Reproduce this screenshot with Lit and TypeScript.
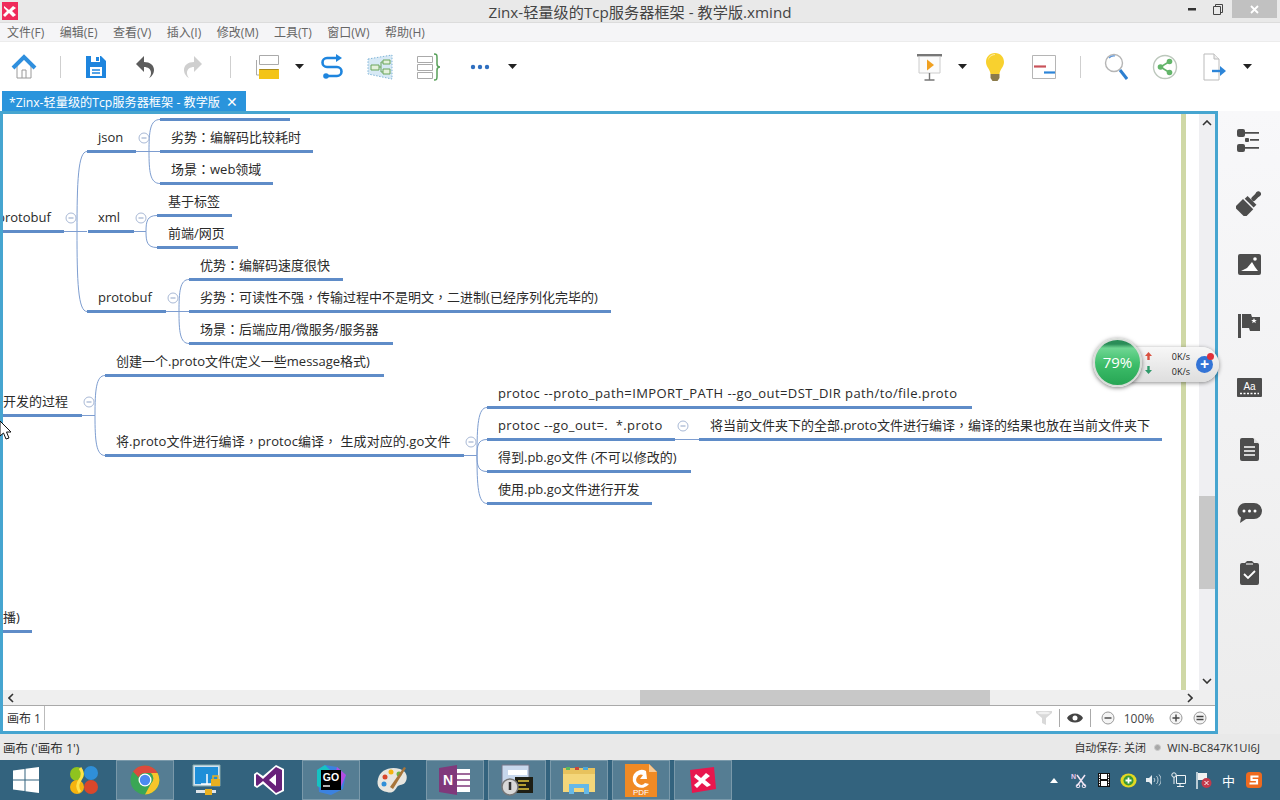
import { LitElement, html, css, svg } from "lit";
import { customElement } from "lit/decorators.js";

// canvas origin in page coordinates, node data below is in page coordinates
const OX = 3;
const OY = 114;

interface MapNode {
  text: string;
  tx: number;
  y: number;
  x1: number;
  x2: number;
  spacing?: number;
}

const NODES: MapNode[] = [
  { text: "", tx: 171, y: 106, x1: 160, x2: 290 },
  { text: "json", tx: 98, y: 138, x1: 87, x2: 136 },
  { text: "劣势：编解码比较耗时", tx: 171, y: 138, x1: 160, x2: 313 },
  { text: "场景：web领域", tx: 171, y: 170, x1: 160, x2: 273 },
  { text: "protobuf", tx: -3, y: 218, x1: 3, x2: 64 },
  { text: "xml", tx: 98, y: 218, x1: 88, x2: 134 },
  { text: "基于标签", tx: 168, y: 202, x1: 157, x2: 232 },
  { text: "前端/网页", tx: 168, y: 234, x1: 157, x2: 238 },
  { text: "protobuf", tx: 98, y: 298, x1: 87, x2: 166 },
  { text: "优势：编解码速度很快", tx: 200, y: 266, x1: 189, x2: 343 },
  { text: "劣势：可读性不强，传输过程中不是明文，二进制(已经序列化完毕的)", tx: 200, y: 298, x1: 189, x2: 611 },
  { text: "场景：后端应用/微服务/服务器", tx: 200, y: 330, x1: 189, x2: 393 },
  { text: "开发的过程", tx: 3, y: 402, x1: 3, x2: 82 },
  { text: "创建一个.proto文件(定义一些message格式)", tx: 116, y: 362, x1: 105, x2: 384 },
  { text: "将.proto文件进行编译，protoc编译， 生成对应的.go文件", tx: 116, y: 442, x1: 105, x2: 464, spacing: 0.06 },
  { text: "protoc --proto_path=IMPORT_PATH --go_out=DST_DIR path/to/file.proto", tx: 498, y: 394, x1: 487, x2: 972, spacing: 0.41 },
  { text: "protoc --go_out=.  *.proto", tx: 498, y: 426, x1: 487, x2: 675, spacing: 0.4 },
  { text: "将当前文件夹下的全部.proto文件进行编译，编译的结果也放在当前文件夹下", tx: 710, y: 426, x1: 699, x2: 1162 },
  { text: "得到.pb.go文件 (不可以修改的)", tx: 498, y: 458, x1: 487, x2: 691 },
  { text: "使用.pb.go文件进行开发", tx: 498, y: 490, x1: 487, x2: 652 },
  { text: "播)", tx: 3, y: 618, x1: 3, x2: 32 },
];

// parent line end, spine x, child x, parent y, child ys
const BRANCHES = [
  { px: 64, sx: 77, cx: 87, py: 231, cy: [151, 231, 311] },
  { px: 136, sx: 149, cx: 160, py: 151, cy: [119, 151, 183] },
  { px: 134, sx: 146, cx: 157, py: 231, cy: [215, 247] },
  { px: 166, sx: 179, cx: 189, py: 311, cy: [279, 311, 343] },
  { px: 82, sx: 95, cx: 105, py: 415, cy: [375, 455] },
  { px: 464, sx: 477, cx: 487, py: 455, cy: [407, 439, 471, 503] },
  { px: 675, sx: 687, cx: 699, py: 439, cy: [439] },
];

const COLLAPSE = [
  [71, 218], [144, 138], [141, 218], [173, 298], [89, 402], [471, 442], [683, 426],
];

const MENU = ["文件(F)", "编辑(E)", "查看(V)", "插入(I)", "修改(M)", "工具(T)", "窗口(W)", "帮助(H)"];

const caret = svg`<svg width="9" height="5" viewBox="0 0 9 5"><path d="M0 0h9L4.5 5z" fill="#222"/></svg>`;
const tbSep = html`<span class="tb-sep"></span>`;

const ICON_HOME = html`<svg width="26" height="26" viewBox="0 0 26 26"><path d="M6 12v12h14V12" fill="#fff" stroke="#9a9a9a"/><path d="M11 24v-8h4v8" fill="none" stroke="#9a9a9a"/><path d="M2 14 13 3l11 11" fill="none" stroke="#2f8fde" stroke-width="4"/></svg>`;
const ICON_SAVE = html`<svg width="22" height="24" viewBox="0 0 22 24"><path d="M1 1h15l5 5v17H1z" fill="#1e85de"/><path d="M6 1h9v6H6z" fill="#fff"/><path d="M11 2h3v4h-3z" fill="#1e85de"/><path d="M5 12h12v9H5z" fill="#fff"/><path d="M7 15h8M7 18h8" stroke="#1e85de" stroke-width="1.4"/></svg>`;
const ICON_UNDO = html`<svg width="20" height="24" viewBox="0 0 20 24"><path d="M9 1 1 9l8 8v-5c4 0 7 2 7 6 0 2-1 4-2 5 4-2 5-6 5-8 0-5-4-8-10-8z" fill="#5c5c5c"/></svg>`;
const ICON_REDO = html`<svg width="20" height="24" viewBox="0 0 20 24"><path d="M11 1l8 8-8 8v-5c-4 0-7 2-7 6 0 2 1 4 2 5-4-2-5-6-5-8 0-5 4-8 10-8z" fill="#cfcfcf"/></svg>`;
const ICON_TOPIC = html`<svg width="24" height="26" viewBox="0 0 24 26"><path d="M4.5 1.5h19v9h-19z" fill="#fff" stroke="#aaa"/><path d="M1.5 6v15h3" fill="none" stroke="#aaa"/><path d="M4 15h20v10H4z" fill="#f3c417"/><path d="M4.5 15.5h19" stroke="#a98b1e"/></svg>`;
const ICON_REL = html`<svg width="24" height="26" viewBox="0 0 24 26"><path d="M18 4H7a4.500 4.500 0 0 0 0 9h10a4.500 4.500 0 0 1 0 9H8" fill="none" stroke="#1e85de" stroke-width="2.600"/><path d="M16 0l6 4-6 4z" fill="#1e85de"/><circle cx="6" cy="22" r="2.800" fill="#1e85de"/></svg>`;
const ICON_BOUNDARY = html`<svg width="26" height="26" viewBox="0 0 26 26"><path d="M1 5 25 1v24L1 20z" fill="#d7e9f5" stroke="#7fb4d8" stroke-dasharray="1.500 1.500"/><path d="M4 11h8v5H4zM16 6h7v4h-7zM16 15h7v5h-7z" fill="#e4f1dc" stroke="#6aa55a"/><path d="M12 13h2V8h2M14 13v5h2" fill="none" stroke="#6aa55a"/></svg>`;
const ICON_SUMMARY = html`<svg width="26" height="28" viewBox="0 0 26 28"><path d="M1.500 3.500h15v6h-15zM1.500 11.500h15v6h-15zM1.500 19.500h15v6h-15z" fill="#fff" stroke="#aaa"/><path d="M18 1c3 0 3 1 3 4v6c0 2 1 3 3 3-2 0-3 1-3 3v6c0 3 0 4-3 4" fill="none" stroke="#58a05a" stroke-width="1.500"/></svg>`;
const ICON_MORE = html`<svg width="20" height="6" viewBox="0 0 20 6"><circle cx="3" cy="3" r="2.200" fill="#2f6fc0"/><circle cx="10" cy="3" r="2.200" fill="#2f6fc0"/><circle cx="17" cy="3" r="2.200" fill="#2f6fc0"/></svg>`;
const ICON_PRESENT = html`<svg width="26" height="28" viewBox="0 0 26 28"><path d="M0 1h25v2.500H0z" fill="#777"/><path d="M2 3.500h21V20H2z" fill="#fbfbfb" stroke="#ccc"/><path d="M10 6.500l7 5.500-7 5.500z" fill="#f0a020"/><path d="M12.500 20v7M7.500 27h10" stroke="#777" stroke-width="1.400"/></svg>`;
const ICON_BULB = html`<svg width="20" height="30" viewBox="0 0 20 30"><path d="M10 1C4.500 1 1 5 1 10c0 5 4 7 4.500 12h9C15 17 19 15 19 10c0-5-3.500-9-9-9z" fill="#f8d12f"/><path d="M10 2c-5 0-7 4-7 7 0-2 3-6 7-6z" fill="#fdeb9a"/><path d="M5.500 22h9v4l-2 3h-5l-2-3z" fill="#8b7b4a"/></svg>`;
const ICON_GANTT = html`<svg width="24" height="24" viewBox="0 0 24 24"><path d="M.5.500h23v23H.5z" fill="#fff" stroke="#b5b5b5"/><path d="M2 11.500h12" stroke="#c9525a" stroke-width="2.200"/><path d="M12 17.500h11" stroke="#2d85d8" stroke-width="2.200"/></svg>`;
const ICON_SEARCH = html`<svg width="24" height="28" viewBox="0 0 24 28"><circle cx="10" cy="10" r="8.500" fill="#fff" stroke="#b5b5b5" stroke-width="1.400"/><path d="M5 5a7 7 0 0 1 6-2" fill="none" stroke="#5c95d8" stroke-width="1.200"/><path d="M16 17l7 9" stroke="#2d7fd0" stroke-width="3"/></svg>`;
const ICON_SHARE = html`<svg width="26" height="26" viewBox="0 0 26 26"><circle cx="13" cy="13" r="11.500" fill="#fff" stroke="#bcc7bc" stroke-width="1.400"/><path d="M17.500 7.500 8.500 13l9 5.500" fill="none" stroke="#63b56a" stroke-width="1.600"/><circle cx="17.500" cy="7.500" r="2.800" fill="#63b56a"/><circle cx="8.500" cy="13" r="2.800" fill="#63b56a"/><circle cx="17.500" cy="18.500" r="2.800" fill="#63b56a"/></svg>`;
const ICON_EXPORT = html`<svg width="24" height="28" viewBox="0 0 24 28"><path d="M1 1h10l5 5v21H1z" fill="#fff" stroke="#bbb"/><path d="M11 1v5h5" fill="#eee" stroke="#bbb"/><path d="M9 18h10" stroke="#2d85d8" stroke-width="2.400"/><path d="M17 13l6 5-6 5z" fill="#2d85d8"/></svg>`;

const TOOLS = [
  { cx: 24, w: 26, c: ICON_HOME },
  { cx: 60, w: 1, c: tbSep },
  { cx: 96, w: 22, c: ICON_SAVE },
  { cx: 145, w: 20, c: ICON_UNDO },
  { cx: 193, w: 20, c: ICON_REDO },
  { cx: 230, w: 1, c: tbSep },
  { cx: 267, w: 24, c: ICON_TOPIC },
  { cx: 299, w: 9, c: caret },
  { cx: 332, w: 24, c: ICON_REL },
  { cx: 380, w: 26, c: ICON_BOUNDARY },
  { cx: 429, w: 26, c: ICON_SUMMARY },
  { cx: 480, w: 20, c: ICON_MORE },
  { cx: 512, w: 9, c: caret },
  { cx: 930, w: 26, c: ICON_PRESENT },
  { cx: 962, w: 9, c: caret },
  { cx: 995, w: 20, c: ICON_BULB },
  { cx: 1044, w: 24, c: ICON_GANTT },
  { cx: 1080, w: 1, c: tbSep },
  { cx: 1116, w: 24, c: ICON_SEARCH },
  { cx: 1165, w: 26, c: ICON_SHARE },
  { cx: 1215, w: 24, c: ICON_EXPORT },
  { cx: 1247, w: 9, c: caret },
];

const RAIL = [
  html`<svg width="24" height="24" viewBox="0 0 24 24" fill="#4d4d4d"><rect x="0" y="0" width="8" height="8" rx="2"/><rect x="0" y="15" width="8" height="8" rx="2"/><rect x="8" y="9" width="4" height="4" rx="1"/><path d="M8 3h14v1.800H8zM13 10h9v1.800h-9zM8 18h14v1.800H8z"/></svg>`,
  html`<svg width="26" height="26" viewBox="0 0 26 26" fill="#4d4d4d"><g transform="rotate(45 13 13)"><rect x="11" y="-2" width="4.500" height="11" rx="2"/><circle cx="13.200" cy="0" r="2.600"/><rect x="7" y="9" width="12.500" height="4"/><path d="M6 14.500h14.500V26H6z"/></g></svg>`,
  html`<svg width="23" height="21" viewBox="0 0 23 21"><rect width="23" height="21" rx="2" fill="#4d4d4d"/><path d="M3 17l6-3 5-6 3 5 3 4z" fill="#fff"/><circle cx="17" cy="5" r="1.800" fill="#fff"/></svg>`,
  html`<svg width="22" height="24" viewBox="0 0 22 24"><path d="M0 0h3v24H0z" fill="#4d4d4d"/><path d="M4 0h9l1 3h8v14H12l-1-3H4z" fill="#4d4d4d"/><path d="M16 4l.800 2h2l-1.600 1.300.600 2-1.800-1.200-1.800 1.200.600-2L13.200 6h2z" fill="#fff"/></svg>`,
  html`<svg width="25" height="19" viewBox="0 0 25 19"><path d="M1 0h23a1 1 0 0 1 1 1v17a1 1 0 0 1-1 1H1a1 1 0 0 1-1-1V1a1 1 0 0 1 1-1z" fill="#4d4d4d"/><text x="12.500" y="11.500" text-anchor="middle" font-size="10" fill="#fff" font-family="Liberation Sans">Aa</text><path d="M3 15.500h19" stroke="#fff" stroke-width="1.500" stroke-dasharray="2 1.500"/></svg>`,
  html`<svg width="19" height="23" viewBox="0 0 19 23"><path d="M2 0h11l6 6v15a2 2 0 0 1-2 2H2a2 2 0 0 1-2-2V2a2 2 0 0 1 2-2z" fill="#4d4d4d"/><path d="M14 0l5 5h-5z" fill="#ddd"/><path d="M4 9h11M4 13h11M4 17h11" stroke="#fff" stroke-width="1.300"/></svg>`,
  html`<svg width="25" height="27" viewBox="0 -6 25 27"><path d="M8 0h9a8 8 0 0 1 0 16H9l-6 4 1-5.500A8 8 0 0 1 8 0z" fill="#4d4d4d"/><circle cx="7" cy="8" r="1.500" fill="#fff"/><circle cx="12.500" cy="8" r="1.500" fill="#fff"/><circle cx="18" cy="8" r="1.500" fill="#fff"/></svg>`,
  html`<svg width="19" height="24" viewBox="0 0 19 24"><path d="M2 2h3l2-2h5l2 2h3a2 2 0 0 1 2 2v18a2 2 0 0 1-2 2H2a2 2 0 0 1-2-2V4a2 2 0 0 1 2-2z" fill="#4d4d4d"/><path d="M6 3h7" stroke="#eee" stroke-width="1.200"/><path d="M4 13l4 4 7-7" fill="none" stroke="#fff" stroke-width="1.800"/></svg>`,
];

// taskbar programs, left to right
const T_CLUSTER = html`<svg width="32" height="32" viewBox="0 0 32 32"><circle cx="9" cy="10" r="7" fill="#8fc31f"/><circle cx="23" cy="9" r="7" fill="#2f8fd8"/><circle cx="9" cy="23" r="7" fill="#f5b30f"/><circle cx="23" cy="23" r="7" fill="#d9472b"/><path d="M12 4c3 4 3 8 0 12s-3 8 0 12" fill="none" stroke="#ffe14a" stroke-width="3"/></svg>`;
const T_CHROME = html`<svg width="30" height="30" viewBox="0 0 30 30"><circle cx="15" cy="15" r="14.500" fill="#3aa655"/><path d="M15 .500A14.500 14.500 0 0 1 27.600 8H15a7 7 0 0 0-6.500 4.300L3 6.500A14.500 14.500 0 0 1 15 .500z" fill="#dc4a3d"/><path d="M27.600 8A14.500 14.500 0 0 1 15 29.500L21 18.500A7 7 0 0 0 21 8z" fill="#f7c52b"/><circle cx="15" cy="15" r="6.500" fill="#fff"/><circle cx="15" cy="15" r="5.200" fill="#4a8af0"/></svg>`;
const T_REMOTE = html`<svg width="30" height="32" viewBox="0 0 30 32"><path d="M1 1h27v21H1z" fill="#cfe3f2" stroke="#8aa"/><path d="M3 3h23v17H3z" fill="#1e8fd8"/><path d="M15 10v10M9 20h12" stroke="#fff" stroke-width="1.500"/><path d="M4 26h20v3H4z" fill="#dfe5ea"/><rect x="19" y="15" width="9" height="7" fill="#e8b021"/><path d="M21 15v-3h5v3" fill="none" stroke="#e8b021" stroke-width="1.500"/><rect x="13" y="25" width="7" height="6" fill="#e8b021"/></svg>`;
const T_VS = html`<svg width="32" height="32" viewBox="0 0 32 32"><path d="M23 1 31 5v22l-8 4-13-11-6 4-3-2V10l3-2 6 4z" fill="#fff"/><path d="M23 3 29 6v20l-6 3-13-12-6 5-1-1V11l1-1 6 5zM23 10l-7 6 7 6z" fill="#68217a"/></svg>`;
const T_GO = html`<svg width="32" height="32" viewBox="0 0 32 32"><path d="M2 6 10 1l12 2 9 8-3 14-12 6-12-3z" fill="#3b82e0"/><path d="M2 6l8-5 6 6-8 18-6-3z" fill="#16c2c2"/><path d="M22 3l9 8-5 12-6-12z" fill="#b14ee0"/><rect x="6" y="6" width="20" height="20" fill="#000"/><text x="16" y="17" text-anchor="middle" font-size="10.500" font-weight="700" fill="#fff" font-family="Liberation Sans">GO</text><path d="M8 22h7" stroke="#fff" stroke-width="1.400"/></svg>`;
const T_PAINT = html`<svg width="32" height="30" viewBox="0 0 32 30"><path d="M2 14C4 5 14 1 24 4c6 2 8 7 6 12s-7 3-9 6-4 7-10 5C4 26 0 21 2 14z" fill="#e8e6df"/><circle cx="9" cy="12" r="2.500" fill="#d9472b"/><circle cx="15" cy="7" r="2.500" fill="#f5b30f"/><circle cx="23" cy="9" r="2.500" fill="#6db33f"/><path d="M14 22 28 2l2 1-13 21z" fill="#a8753a"/><circle cx="8" cy="19" r="2.500" fill="#2f8fd8"/></svg>`;
const T_ONE = html`<svg width="32" height="30" viewBox="0 0 32 30"><path d="M0 3 18 0v30L0 27z" fill="#80397b"/><text x="9" y="20" text-anchor="middle" font-size="14" font-weight="700" fill="#fff" font-family="Liberation Sans">N</text><path d="M18 4h13v23H18z" fill="#fff"/><path d="M18 9h13M18 15h13M18 21h13" stroke="#80397b" stroke-width="1.500"/></svg>`;
const T_LOCK = html`<svg width="32" height="32" viewBox="0 0 32 32"><path d="M1 1h27v21H1z" fill="#c7d7ec" stroke="#778"/><path d="M7 6h19v5H7z" fill="#fff"/><path d="M14 13h18v16H14z" fill="#1e1e14"/><path d="M17 17h11M17 21h8M17 25h11" stroke="#e3c83c" stroke-width="1.500"/><circle cx="9" cy="23" r="8" fill="#d8d8d8" stroke="#777" stroke-width="1.500"/><path d="M9 18v8" stroke="#333" stroke-width="2.500"/></svg>`;
const T_FOLDER = html`<svg width="34" height="30" viewBox="0 0 34 30"><path d="M1 3h32v24H1z" fill="#f4d67a"/><path d="M1 3h32v6H1z" fill="#e8c25d"/><path d="M4 2h4v3H4z" fill="#5cb85c"/><path d="M13 2h4v3h-4z" fill="#c9473a"/><path d="M21 2h5v3h-5z" fill="#4aa7d8"/><path d="M7 29V19h20v10h-5v-6H12v6z" fill="#65b8e8"/></svg>`;
const T_PDF = html`<svg width="33" height="33" viewBox="0 0 33 33"><path d="M0 0h24l8 8v25H0z" fill="#f08a24"/><path d="M24 0l8 8h-8z" fill="#f9c992"/><path d="M21 7a9 9 0 1 0 3 13l-4-1a5 5 0 1 1-2-8l-3 4h7z" fill="#fff"/><text x="16" y="31" text-anchor="middle" font-size="8" fill="#fff" font-family="Liberation Sans">PDF</text></svg>`;
const T_XMIND = html`<svg width="28" height="28" viewBox="0 0 28 28"><path d="M1 4 25 1l2 22-24 4z" fill="#e8174e"/><path d="M7 8l5 4 5-5 4 3-5 4 6 5-4 2-5-4-5 5-3-3 5-4-5-4z" fill="#fff"/></svg>`;

const TASKS = [
  { icon: T_CLUSTER, on: false, w: 65, mr: 0 },
  { icon: T_CHROME, on: true, w: 58, mr: 4 },
  { icon: T_REMOTE, on: false, w: 58, mr: 0 },
  { icon: T_VS, on: false, w: 66, mr: 0 },
  { icon: T_GO, on: true, w: 58, mr: 4 },
  { icon: T_PAINT, on: false, w: 56, mr: 6 },
  { icon: T_ONE, on: true, w: 58, mr: 4 },
  { icon: T_LOCK, on: true, w: 58, mr: 4 },
  { icon: T_FOLDER, on: true, w: 58, mr: 4 },
  { icon: T_PDF, on: true, w: 58, mr: 4 },
  { icon: T_XMIND, on: true, w: 58, mr: 0 },
];

const TRAY = [
  html`<svg width="8" height="5" viewBox="0 0 8 5"><path d="M0 5 4 0l4 5z" fill="#fff"/></svg>`,
  html`<svg width="16" height="16" viewBox="0 0 16 16"><text x="0" y="7" font-size="7" font-weight="700" fill="#e8c8f0" font-family="Liberation Sans">N</text><path d="M6 3l8 11M14 3 6 14" stroke="#f2e6f5" stroke-width="1.500"/><circle cx="7" cy="14" r="1.800" fill="none" stroke="#f2e6f5"/><circle cx="13" cy="14" r="1.800" fill="none" stroke="#f2e6f5"/></svg>`,
  html`<svg width="12" height="14" viewBox="0 0 12 14"><rect width="12" height="14" fill="#111"/><rect x="3" y="1" width="6" height="5" fill="#fff"/><rect x="3" y="8" width="6" height="5" fill="#fff"/><path d="M1.500 1v12M10.500 1v12" stroke="#fff" stroke-dasharray="1.500 1"/></svg>`,
  html`<svg width="17" height="15" viewBox="0 0 17 15"><ellipse cx="8.500" cy="7.500" rx="8" ry="7" fill="#e4d822"/><circle cx="8.500" cy="7.500" r="5" fill="#3a9a36"/><path d="M5.500 7.500h6M8.500 4.500v6" stroke="#fff" stroke-width="1.800"/></svg>`,
  html`<svg width="15" height="14" viewBox="0 0 15 14"><path d="M0 5h3l3-3v10L3 9H0z" fill="#e6edf1"/><path d="M8 5a3 3 0 0 1 0 4M10.500 3a6 6 0 0 1 0 8M13 1.500a8 8 0 0 1 0 11" fill="none" stroke="#b8cad4"/></svg>`,
  html`<svg width="15" height="16" viewBox="0 0 15 16"><path d="M5.500 3.500h9v8h-9zM9 11.500v3M6 14.500h7" fill="none" stroke="#f0f4f6"/><circle cx="3" cy="3" r="2.200" fill="none" stroke="#f0f4f6"/><path d="M3 5v7" stroke="#f0f4f6"/></svg>`,
  html`<svg width="16" height="17" viewBox="0 0 16 17"><path d="M1 0v17" stroke="#e6edf1" stroke-width="1.500"/><path d="M2 1h9v7H2z" fill="#f2f2f2"/><circle cx="10.500" cy="11" r="5" fill="#c43a4b"/><path d="M8.500 9l4 4M12.500 9l-4 4" stroke="#fff"/></svg>`,
  html`<span class="tray-zh">中</span>`,
  html`<svg width="16" height="16" viewBox="0 0 16 16"><rect width="16" height="16" rx="3.500" fill="#ee6a1f"/><path d="M12.500 4.500H5.500v3.500h5.500v3.500H3.500" fill="none" stroke="#fff" stroke-width="2.200"/></svg>`,
];

@customElement("app-root")
export class AppRoot extends LitElement {
  static styles = css`
    :host {
      display: block;
      width: 1280px;
      height: 800px;
      overflow: hidden;
      font-family: "Open Sans", "Noto Sans CJK SC", sans-serif;
      color: #222;
      background: #fff;
    }
    .title {
      height: 23px;
      background: #e9e9e9;
      border-bottom: 1px solid #dcdcdc;
      box-sizing: border-box;
      display: flex;
      align-items: center;
      position: relative;
      font-size: 15.2px;
      color: #444;
    }
    .title-text { flex: 1; text-align: center; white-space: nowrap; }
    .app-logo { position: absolute; left: 2px; top: 2px; display: block; }
    .win { position: absolute; right: 3px; top: 0; height: 18px; display: flex; align-items: center; }
    .win-btn { width: 26px; display: flex; justify-content: center; }
    .win-close {
      width: 45px; height: 18px; background: #c1c1c1; color: #fff; display: flex;
      align-items: center; justify-content: center; margin-left: 1px;
    }
    .menu {
      height: 19px;
      background: #f5f5f7;
      border-bottom: 1px solid #ececec;
      box-sizing: border-box;
      display: flex;
      align-items: center;
      gap: 15.5px;
      padding-left: 7px;
      font-size: 12px;
      color: #666;
    }
    .tools { height: 49px; background: #fff; display: flex; align-items: center; }
    .tool { display: flex; align-items: center; justify-content: center; flex: none; }
    .tb-sep { display: block; width: 1px; height: 22px; background: #cfcfcf; }
    .tabs { height: 20px; background: #fff; padding-left: 2px; }
    .tab {
      width: 244px;
      height: 21px;
      background: #2a94dc;
      color: #fff;
      font-size: 12.2px;
      display: flex;
      align-items: center;
      justify-content: space-between;
      padding: 0 8px 0 7px;
      box-sizing: border-box;
      white-space: nowrap;
    }
    .tab-x { font-size: 14px; line-height: 14px; }
    .main { height: 623px; display: flex; position: relative; }
    .editor {
      width: 1218px;
      height: 623px;
      box-sizing: border-box;
      border: 3px solid #46a5d0;
      background: #fff;
      display: flex;
      flex-direction: column;
      flex: none;
    }
    .canvas-row { height: 576px; display: flex; }
    .canvas { width: 1196px; position: relative; overflow: hidden; background: #fff; }
    .canvas svg.links { position: absolute; left: 0; top: 0; }
    .node {
      position: absolute;
      font-size: 13px;
      line-height: 20px;
      white-space: pre;
      color: #2a2a2a;
    }
    .punct { font-family: "Noto Sans CJK TC", sans-serif; }
    .green-line { position: absolute; top: 0; bottom: 0; width: 5px; background: #cfd8a6; }
    .vscroll {
      width: 16px;
      background: #efeff2;
      display: flex;
      flex-direction: column;
      align-items: center;
      justify-content: space-between;
      padding: 6px 0;
      box-sizing: border-box;
      position: relative;
    }
    .vthumb { position: absolute; left: 0; top: 382px; width: 16px; height: 93px; background: #c8c8c8; }
    .hscroll {
      height: 15px;
      background: #efefef;
      position: relative;
      display: flex;
      align-items: center;
      justify-content: space-between;
      padding: 0 22px 0 5px;
    }
    .hthumb { position: absolute; left: 637px; top: 0; width: 350px; height: 15px; background: #c8c8c8; }
    .sheetbar {
      height: 25px;
      border-top: 1px solid #a9a9a9;
      box-sizing: border-box;
      display: flex;
      align-items: center;
      font-size: 12px;
      color: #333;
      background: #fff;
    }
    .sheet-tab {
      width: 42px;
      height: 24px;
      box-sizing: border-box;
      border-right: 1px solid #bbb;
      padding-left: 4px;
      display: flex;
      align-items: center;
      white-space: nowrap;
    }
    .sheet-tools { flex: 1; display: flex; align-items: center; justify-content: flex-end; padding-right: 8px; }
    .v-sep { width: 1px; height: 18px; background: #aaa; margin: 0 7px; }
    .zoom-minus { margin-left: 3px; }
    .zoom-plus { margin-left: 6px; }
    .zoom-fit { margin-left: 10px; }
    .zoom { width: 48px; text-align: center; color: #444; }
    .rail {
      flex: 1;
      background: linear-gradient(#f8f8fa, #ececec);
      display: flex;
      flex-direction: column;
      align-items: center;
    }
    .rail-item { height: 61.7px; display: flex; align-items: center; justify-content: center; flex: none; }
    .rail-item:first-child { margin-top: -1px; }
    .status {
      height: 26px;
      background: #e9e9e9;
      display: flex;
      align-items: center;
      justify-content: space-between;
      padding: 0 20px 0 3px;
      font-size: 12.5px;
      color: #333;
    }
    .status-right { display: flex; align-items: center; font-size: 11.2px; }
    .autosave { font-size: 11px; margin-right: 8px; }
    .dot { width: 5px; height: 5px; border-radius: 50%; background: #a8a8a8; border: 1px solid #ccc; margin-right: 6px; }
    .task {
      height: 40px;
      background: #33637e;
      display: flex;
      align-items: stretch;
      position: relative;
    }
    .start { width: 51px; display: flex; align-items: center; justify-content: center; }
    .task-item { display: flex; align-items: center; justify-content: center; box-sizing: border-box; flex: none; }
    .task-item.on {
      background: rgba(255, 255, 255, 0.17);
      border: 1px solid rgba(255, 255, 255, 0.22);
      height: 40px;
    }
    .tray { position: absolute; right: 0; top: 0; height: 40px; width: 239px; }
    .tray-in { display: flex; align-items: center; height: 40px; }
    .tray-slot { width: 25px; display: flex; justify-content: center; align-items: center; flex: none; }
    .tray-zh { color: #fff; font-size: 13px; }
    .meter {
      position: absolute;
      left: 1093px;
      top: 227px;
      width: 126px;
      height: 49px;
    }
    .pill {
      position: absolute;
      left: 24px;
      top: 9px;
      width: 102px;
      height: 35px;
      border-radius: 18px;
      background: linear-gradient(#f7f7f7, #dedede);
      box-shadow: 0 1px 4px rgba(0, 0, 0, 0.45);
      font-size: 9px;
      color: #222;
    }
    .speed { position: absolute; right: 29px; font-size: 9px; line-height: 12px; }
    .speed.up { top: 4px; }
    .speed.down { top: 19px; }
    .arrow { position: absolute; left: 28px; }
    .arrow.up { top: 5px; }
    .arrow.down { top: 19px; }
    .plus {
      position: absolute;
      right: 6px;
      top: 9px;
      width: 17px;
      height: 17px;
      border-radius: 50%;
      background: #3374d6;
      color: #fff;
      font-size: 16px;
      line-height: 16px;
      text-align: center;
      font-weight: 700;
    }
    .plus-dot {
      position: absolute;
      right: 5px;
      top: 6px;
      width: 7px;
      height: 7px;
      border-radius: 50%;
      background: #e0303a;
    }
    .ball {
      position: absolute;
      left: 0;
      top: 0;
      width: 49px;
      height: 49px;
      box-sizing: border-box;
      border-radius: 50%;
      border: 2px solid #d8dcd8;
      background: linear-gradient(#2a8d58 0, #2a8d58 9%, #6fd693 18%, #3cbd69 55%, #27a554 100%);
      box-shadow: 0 1px 4px rgba(0, 0, 0, 0.5);
      color: #fff;
      font-size: 15px;
      line-height: 45px;
      text-align: center;
    }
    .cursor { position: absolute; left: 0; top: 310px; }
  `;

  private renderTools() {
    let x = 0;
    return TOOLS.map((t) => {
      const left = t.cx - t.w / 2 - x;
      x = t.cx + t.w / 2;
      return html`<div class="tool" style="margin-left:${left}px;width:${t.w}px">${t.c}</div>`;
    });
  }

  private renderLinks() {
    return svg`
      ${BRANCHES.map((b) => {
        const py = b.py + 0.5;
        const parts = [`M${b.px} ${py}H${b.sx}`];
        b.cy.forEach((c) => {
          const cy = c + 0.5;
          if (c === b.py) {
            parts.push(`M${b.sx} ${py}H${b.cx}`);
          } else {
            const bend = py + (cy - py) * 0.62;
            parts.push(`M${b.sx} ${py}C${b.sx} ${bend} ${b.sx + 1} ${cy} ${b.cx} ${cy}`);
          }
        });
        return svg`<path d=${parts.join("")} fill="none" stroke="#7d9dd0" stroke-width="1"/>`;
      })}
      ${NODES.map((n) => {
        const ly = n.y + 13.5;
        return svg`<path d="M${n.x1} ${ly}H${n.x2}" stroke="#5f8cc8" stroke-width="3"/>`;
      })}
      ${COLLAPSE.map(
        ([cx, cy]) => svg`
          <circle cx=${cx} cy=${cy} r="5" fill="#fff" stroke="#a9b9d6"/>
          <path d="M${cx - 2.5} ${cy}h5" stroke="#8fa3c6"/>`
      )}`;
  }

  // full-width colon and comma sit centred in the original, as in the TC cut
  private renderText(text: string) {
    return text
      .split(/([：，])/)
      .map((part) => (part === "：" || part === "，" ? html`<span class="punct">${part}</span>` : part));
  }

  render() {
    return html`
      <div class="title">
        <svg class="app-logo" width="16" height="18" viewBox="0 0 16 18">
          <rect width="16" height="18" fill="#ef2b5b"/>
          <path d="M2 4l5 4 4-4 3 2-4 3 4 4-3 2-4-4-4 4-2-2 4-4-3-3z" fill="#fff"/>
        </svg>
        <div class="title-text">Zinx-轻量级的Tcp服务器框架 - 教学版.xmind</div>
        <div class="win">
          <div class="win-btn"><svg width="8" height="3"><rect width="8" height="2.500" fill="#333"/></svg></div>
          <div class="win-btn">
            <svg width="10" height="11" viewBox="0 0 10 11"><path d="M2.500 2.500V.5h7v8h-2M.5 2.500h7v8h-7z" fill="none" stroke="#444"/></svg>
          </div>
          <div class="win-close">
            <svg width="9" height="9" viewBox="0 0 9 9"><path d="M1 1l7 7M8 1 1 8" stroke="#fff" stroke-width="1.800"/></svg>
          </div>
        </div>
      </div>
      <div class="menu">${MENU.map((m) => html`<span>${m}</span>`)}</div>
      <div class="tools">${this.renderTools()}</div>
      <div class="tabs">
        <div class="tab">
          <span>*Zinx-轻量级的Tcp服务器框架 - 教学版</span>
          <span class="tab-x">✕</span>
        </div>
      </div>
      <div class="main">
        <div class="editor">
          <div class="canvas-row">
            <div class="canvas">
              <div class="green-line" style="left:${1181 - OX}px"></div>
              <svg class="links" width="1196" height="576" viewBox="${OX} ${OY} 1196 576">${this.renderLinks()}</svg>
              ${NODES.filter((n) => n.text).map(
                (n) => html`<div
                  class="node"
                  style="left:${n.tx - OX}px;top:${n.y - OY - 11}px;letter-spacing:${n.spacing ?? 0}px"
                >${this.renderText(n.text)}</div>`
              )}
            </div>
            <div class="vscroll">
              <svg width="10" height="6" viewBox="0 0 10 6"><path d="M1 5l4-4 4 4" fill="none" stroke="#333" stroke-width="1.600"/></svg>
              <div class="vthumb"></div>
              <svg width="10" height="6" viewBox="0 0 10 6"><path d="M1 1l4 4 4-4" fill="none" stroke="#333" stroke-width="1.600"/></svg>
            </div>
          </div>
          <div class="hscroll">
            <svg width="6" height="10" viewBox="0 0 6 10"><path d="M5 1 1 5l4 4" fill="none" stroke="#333" stroke-width="1.600"/></svg>
            <div class="hthumb"></div>
            <svg width="6" height="10" viewBox="0 0 6 10"><path d="M1 1l4 4-4 4" fill="none" stroke="#333" stroke-width="1.600"/></svg>
          </div>
          <div class="sheetbar">
            <div class="sheet-tab">画布 1</div>
            <div class="sheet-tools">
              <svg width="16" height="14" viewBox="0 0 16 14"><path d="M0 0h16v2l-6 5v7l-4-2V7L0 2z" fill="#d9d9d9"/><ellipse cx="8" cy="2" rx="6" ry="1.300" fill="#f0f0f0"/></svg>
              <div class="v-sep"></div>
              <svg width="16" height="10" viewBox="0 0 16 10"><path d="M0 5c3-6 13-6 16 0-3 6-13 6-16 0z" fill="#444"/><circle cx="8" cy="5" r="2.500" fill="#fff"/></svg>
              <div class="v-sep"></div>
              <svg class="zoom-minus" width="14" height="14" viewBox="0 0 14 14"><circle cx="7" cy="7" r="6" fill="#f4f4f4" stroke="#999"/><path d="M3.500 7h7" stroke="#444" stroke-width="1.400"/></svg>
              <div class="zoom">100%</div>
              <svg class="zoom-plus" width="14" height="14" viewBox="0 0 14 14"><circle cx="7" cy="7" r="6" fill="#f4f4f4" stroke="#999"/><path d="M3.500 7h7M7 3.500v7" stroke="#444" stroke-width="1.400"/></svg>
              <svg class="zoom-fit" width="14" height="14" viewBox="0 0 14 14"><circle cx="7" cy="7" r="6" fill="#f4f4f4" stroke="#999"/><path d="M3.500 5.500h7M3.500 8.500h7" stroke="#444" stroke-width="1.400"/></svg>
            </div>
          </div>
        </div>
        <div class="rail">${RAIL.map((r) => html`<div class="rail-item">${r}</div>`)}</div>
        <div class="meter">
          <div class="pill">
            <svg class="arrow up" width="7" height="8" viewBox="0 0 7 8"><path d="M3.500 0 7 4H4.700v4H2.300V4H0z" fill="#d9503f"/></svg>
            <svg class="arrow down" width="7" height="8" viewBox="0 0 7 8"><path d="M3.500 8 7 4H4.700V0H2.300v4H0z" fill="#2f9a6a"/></svg>
            <span class="speed up">0K/s</span>
            <span class="speed down">0K/s</span>
            <div class="plus">+</div>
            <div class="plus-dot"></div>
          </div>
          <div class="ball">79%</div>
        </div>
        <svg class="cursor" width="13" height="20" viewBox="0 0 13 20">
          <path d="M0 0v15l3.500-3 2.500 6 3-1-2.500-6H11z" fill="#fff" stroke="#111"/>
        </svg>
      </div>
      <div class="status">
        <span>画布 ('画布 1')</span>
        <div class="status-right">
          <span class="autosave">自动保存: 关闭</span>
          <span class="dot"></span>
          <span>WIN-BC847K1UI6J</span>
        </div>
      </div>
      <div class="task">
        <div class="start">
          <svg width="26" height="26" viewBox="0 0 26 26"><path d="M0 3.500 11.500 2v10.500H0zM12.500 1.800 26 0v12.500H12.500zM0 13.500h11.500V24L0 22.500zM12.500 13.500H26V26L12.500 24.200z" fill="#fff"/></svg>
        </div>
        ${TASKS.map(
          (t) => html`<div class="task-item ${t.on ? "on" : ""}" style="width:${t.w}px;margin-right:${t.mr}px">${t.icon}</div>`
        )}
        <div class="tray">
          <div class="tray-in">${TRAY.map((t) => html`<div class="tray-slot">${t}</div>`)}</div>
        </div>
      </div>
    `;
  }
}
